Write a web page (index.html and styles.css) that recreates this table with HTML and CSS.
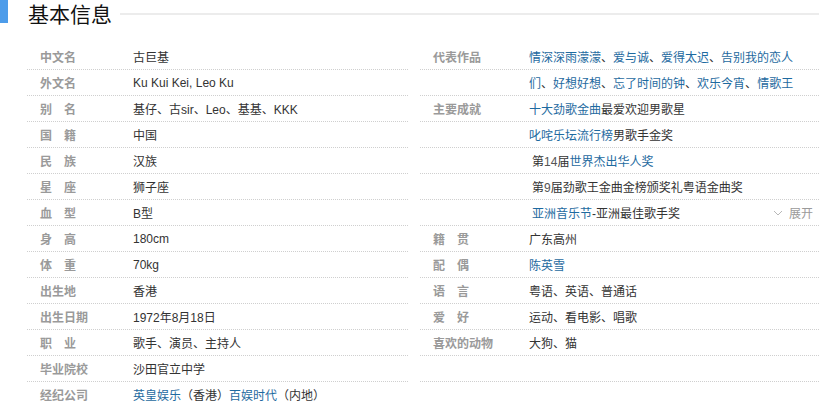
FILE: index.html
```html
<!DOCTYPE html>
<html lang="zh-CN">
<head>
<meta charset="utf-8">
<title>基本信息</title>
<link rel="stylesheet" href="styles.css">
</head>
<body>
<div class="header">
  <span class="bar"></span>
  <h2 class="title">基本信息</h2>
  <span class="rule"></span>
</div>
<div class="info">
  <dl class="col col-left">
    <div class="row"><dt>中文名</dt><dd>古巨基</dd></div>
    <div class="row"><dt>外文名</dt><dd class="latin">Ku Kui Kei, Leo Ku</dd></div>
    <div class="row"><dt class="sp">别名</dt><dd>基仔、古sir、Leo、基基、KKK</dd></div>
    <div class="row"><dt class="sp">国籍</dt><dd>中国</dd></div>
    <div class="row"><dt class="sp">民族</dt><dd>汉族</dd></div>
    <div class="row"><dt class="sp">星座</dt><dd>狮子座</dd></div>
    <div class="row"><dt class="sp">血型</dt><dd>B型</dd></div>
    <div class="row"><dt class="sp">身高</dt><dd>180cm</dd></div>
    <div class="row"><dt class="sp">体重</dt><dd>70kg</dd></div>
    <div class="row"><dt>出生地</dt><dd>香港</dd></div>
    <div class="row"><dt>出生日期</dt><dd>1972年8月18日</dd></div>
    <div class="row"><dt class="sp">职业</dt><dd>歌手、演员、主持人</dd></div>
    <div class="row"><dt>毕业院校</dt><dd>沙田官立中学</dd></div>
    <div class="row"><dt>经纪公司</dt><dd><a>英皇娱乐</a>（香港）<a>百娱时代</a>（内地）</dd></div>
  </dl>
  <dl class="col col-right">
    <div class="row"><dt>代表作品</dt><dd><a>情深深雨濛濛</a>、<a>爱与诚</a>、<a>爱得太迟</a>、<a>告别我的恋人</a></dd></div>
    <div class="row"><dt></dt><dd><a>们</a>、<a>好想好想</a>、<a>忘了时间的钟</a>、<a>欢乐今宵</a>、<a>情歌王</a></dd></div>
    <div class="row"><dt>主要成就</dt><dd><a>十大劲歌金曲</a>最爱欢迎男歌星</dd></div>
    <div class="row"><dt></dt><dd><a>叱咤乐坛流行榜</a>男歌手金奖</dd></div>
    <div class="row"><dt></dt><dd class="ind">第<span class="num">14</span>届<a>世界杰出华人奖</a></dd></div>
    <div class="row"><dt></dt><dd class="ind">第<span class="num">9</span>届劲歌王金曲金榜颁奖礼粤语金曲奖</dd></div>
    <div class="row"><dt></dt><dd class="ind grow"><span><a>亚洲音乐节</a>-亚洲最佳歌手奖</span><span class="more"><svg class="chev" width="10" height="6" viewBox="0 0 10 6"><path d="M1 1 L5 5 L9 1" fill="none" stroke="#b8b8b8" stroke-width="1"/></svg>展开</span></dd></div>
    <div class="row"><dt class="sp">籍贯</dt><dd>广东高州</dd></div>
    <div class="row"><dt class="sp">配偶</dt><dd><a>陈英雪</a></dd></div>
    <div class="row"><dt class="sp">语言</dt><dd>粤语、英语、普通话</dd></div>
    <div class="row"><dt class="sp">爱好</dt><dd>运动、看电影、唱歌</dd></div>
    <div class="row"><dt>喜欢的动物</dt><dd>大狗、猫</dd></div>
    <div class="row"><dt></dt><dd></dd></div>
  </dl>
</div>
</body>
</html>
```
FILE: styles.css
```css
html, body {
  margin: 0;
  padding: 0;
  background: #fff;
}
body {
  font-family: "Liberation Sans", Arial, "Noto Sans CJK SC", sans-serif;
  font-size: 12px;
  color: #333;
  width: 819px;
  overflow: hidden;
}
.header {
  display: flex;
  align-items: flex-start;
  height: 44px;
}
.bar {
  width: 8px;
  height: 23px;
  background: #4d9cea;
  flex: none;
}
.title {
  margin: 0 0 0 20px;
  font-family: "Noto Sans CJK SC", sans-serif;
  font-weight: 400;
  font-size: 21px;
  line-height: 27px;
  color: #111;
  flex: none;
}
.rule {
  flex: 1;
  margin: 13px 0 0 8px;
  height: 2px;
  background: #ececec;
}
.info {
  display: flex;
  gap: 12px;
  padding-left: 27px;
}
.col {
  margin: 0;
  display: flex;
  flex-direction: column;
}
.col-left { width: 381px; }
.col-right { flex: 1; }
.row {
  display: flex;
  align-items: center;
  height: 25px;
  border-bottom: 1px dotted #cfcfcf;
}
dt {
  flex: none;
  box-sizing: border-box;
  padding-left: 13px;
  font-family: "Noto Sans CJK SC", sans-serif;
  font-weight: 700;
  color: #9a9a9a;
  white-space: nowrap;
}
.col-left dt { width: 106px; }
.col-right dt { width: 109px; }
dt.sp { letter-spacing: 12px; }
dd {
  margin: 0;
  flex: 1;
  white-space: nowrap;
  color: #333;
  font-family: "Liberation Sans", Arial, "Noto Sans CJK SC", sans-serif;
}
dd a {
  color: #1e6aa0;
  text-decoration: none;
}
.num { color: #555; }
.ind { padding-left: 3px; }
.grow {
  display: flex;
  justify-content: space-between;
  align-items: center;
}
.more {
  display: flex;
  align-items: center;
  gap: 6px;
  color: #9a9a9a;
  padding-right: 6px;
}
.chev { display: block; }
```
